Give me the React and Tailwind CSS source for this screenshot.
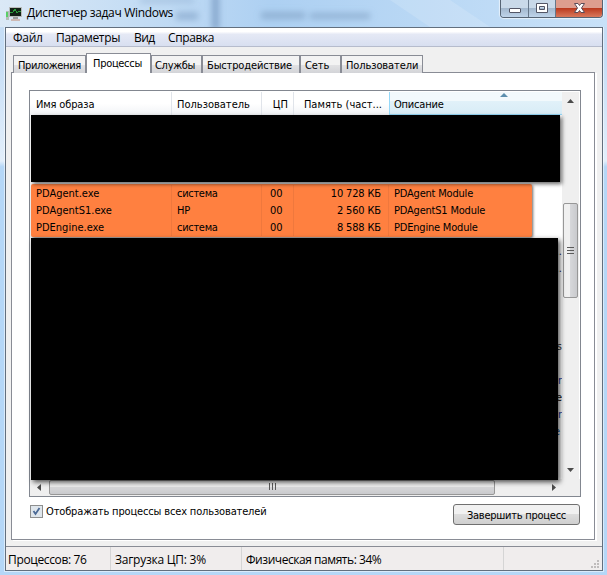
import { clsx } from 'clsx'

const MENU = [
  { label: 'Файл', style: 'w-[43px] tracking-[-0.3px]' },
  { label: 'Параметры', style: 'w-[78px] tracking-[-0.35px]' },
  { label: 'Вид', style: 'w-[34px] tracking-[-0.6px]' },
  { label: 'Справка', style: 'w-[60px] tracking-[-0.4px]' },
]

const TABS = [
  { label: 'Приложения', style: 'w-[73px] pl-[4px] tracking-[-0.35px]' },
  { label: 'Процессы', style: 'w-[65px] pl-[6px] tracking-[-0.3px]', active: true },
  { label: 'Службы', style: 'w-[51px] pl-[3px] tracking-[-0.3px]' },
  { label: 'Быстродействие', style: 'w-[98px] pl-[4px] tracking-[-0.15px]' },
  { label: 'Сеть', style: 'w-[41px] pl-[4px] tracking-[-0.1px]' },
  { label: 'Пользователи', style: 'w-[82px] pl-[4px] tracking-[-0.1px]' },
]

const PROCESSES = [
  { name: 'PDAgent.exe', user: 'система', cpu: '00', memory: '10 728 КБ', description: 'PDAgent Module' },
  { name: 'PDAgentS1.exe', user: 'HP', cpu: '00', memory: '2 560 КБ', description: 'PDAgentS1 Module' },
  { name: 'PDEngine.exe', user: 'система', cpu: '00', memory: '8 588 КБ', description: 'PDEngine Module' },
]

// last letters of the descriptions that stick out from under the cover
const CLIPPED = [
  { text: '..', style: 'mt-[0px] text-[#1c2d55]' },
  { text: '..', style: 'mt-[0px] text-[#1c2d55]' },
  { text: 's', style: 'mt-[61px] text-[#333333]' },
  { text: 'or', style: 'mt-[17px] text-[#233a9c]' },
  { text: 'e', style: 'mt-[0px] text-[#111111]' },
  { text: 'ur', style: 'mt-[0px] text-[#233a9c]' },
  { text: 'e', style: 'mt-[0px] mr-[2px] text-[#1d5a9c]' },
]

const COLUMNS = 'grid grid-cols-[141px_90px_32px_95px_1fr]'
const TAHOMA = "font-['DejaVu_Sans_Condensed','DejaVu_Sans',sans-serif] font-stretch-condensed"
const SEGOE = "font-['Open_Sans','Noto_Sans',sans-serif] font-stretch-normal"

const AppIcon = () => (
  <svg className="h-[16px] w-[17px]" viewBox="0 0 17 16" shapeRendering="crispEdges">
    <rect x="0" y="5" width="3" height="9" fill="#b4bdb6" />
    <rect x="0" y="6" width="2" height="5" fill="#59cf66" />
    <rect x="3" y="1" width="13" height="10" fill="#b9bcbb" />
    <rect x="4" y="2" width="11" height="8" fill="#122117" />
    <path d="M4 6h3l2-3 2 4 2-2h2" fill="none" stroke="#2b9c3c" />
    <rect x="7" y="11" width="5" height="2" fill="#9a9e9d" />
    <rect x="5" y="13" width="9" height="2" fill="#cdb9b4" />
  </svg>
)

const WindowButtons = () => (
  <div className="flex h-[18px] w-[103px] overflow-hidden rounded-b-[4px] border border-t-0 border-[#566474] shadow-[0_0_1px_1px_rgba(255,255,255,0.6)]">
    <button className="flex w-[28px] items-center justify-center border-r border-[#66778a] bg-linear-to-b from-[#c9d9e9] from-45% via-[#a3b8ce] via-50% to-[#bfd4ea]">
      <svg className="h-[17px] w-[27px]" viewBox="0 0 27 17">
        <rect x="8.5" y="8.5" width="11" height="4" rx="0.5" fill="#fff" stroke="#535666" />
      </svg>
    </button>
    <button className="flex w-[27px] items-center justify-center border-r border-[#66778a] bg-linear-to-b from-[#c9d9e9] from-45% via-[#a3b8ce] via-50% to-[#bfd4ea]">
      <svg className="h-[17px] w-[26px]" viewBox="0 0 26 17">
        <path d="M7.5 3.5h11v9h-11zM10.5 6.5v3h5v-3z" fill="#fff" fillRule="evenodd" stroke="#535666" />
      </svg>
    </button>
    <button className="flex flex-1 items-center justify-center bg-linear-to-b from-[#dd9d8e] from-45% via-[#bb3a1f] via-50% to-[#d9785c]">
      <svg className="h-[17px] w-[46px]" viewBox="0 0 46 17">
        <path d="M18.500 3.500h3.500l1.500 2 1.500-2h3.500l-3 4.500 3 4.500h-3.500l-1.500-2-1.500 2h-3.500l3-4.500z" fill="#fff" stroke="#5b4c58" />
      </svg>
    </button>
  </div>
)

// smudges of whatever lies behind the glass title bar
const GlassBackdrop = () => (
  <svg className="absolute inset-0 h-[27px] w-[607px]" viewBox="0 0 607 27">
    <defs>
      <filter id="smudge" x="-20%" y="-100%" width="140%" height="300%">
        <feGaussianBlur stdDeviation="3" />
      </filter>
    </defs>
    <g filter="url(#smudge)">
      <rect x="176" y="12" width="22" height="8" fill="#7f9fc4" opacity="0.6" />
      <rect x="140" y="-2" width="54" height="5" fill="#7f9fc4" opacity="0.4" />
      <rect x="212" y="-6" width="7" height="36" fill="#6f92ba" opacity="0.7" />
      <rect x="261" y="12" width="44" height="7" fill="#7d9cc0" opacity="0.6" />
      <rect x="310" y="13" width="60" height="6" fill="#7d9cc0" opacity="0.6" />
    </g>
    <path d="M390 0h60l40 27h-60z" fill="#fff" opacity="0.15" />
  </svg>
)

const Tab = ({ label, style, active }) => (
  <div
    className={clsx(
      'shrink-0 border border-b-0 border-[#898c95] whitespace-nowrap',
      style,
      active
        ? 'h-[20px] bg-white pt-[3px]'
        : 'h-[18px] bg-linear-to-b from-[#f3f3f3] from-50% via-[#e3e3e5] via-50% to-[#d3d4d8] pt-[3px]',
    )}
  >
    {label}
  </div>
)

const TableHeader = () => (
  <div className="flex h-[23px] w-[532px] bg-linear-to-b from-white from-50% to-[#f1f3f6] leading-[25px] whitespace-nowrap">
    <div className="w-[142px] border-r border-[#e0e4ea] pl-[6px] tracking-[-0.15px]">Имя образа</div>
    <div className="w-[90px] border-r border-[#e0e4ea] pl-[5px]">Пользователь</div>
    <div className="w-[32px] border-r border-[#e0e4ea] pr-[5px] text-right">ЦП</div>
    <div className="w-[95px] pr-[7px] text-right">Память (част...</div>
    <div className="relative flex-1 border-b border-l border-[#96d9f9] bg-linear-to-b from-[#f2f9fc] from-40% via-[#e1f1f9] via-42% to-[#d8ecf6] pl-[4px] tracking-[-0.2px]">
      Описание
      <svg className="absolute top-[1px] left-[110px] h-[4px] w-[8px]" viewBox="0 0 8 4">
        <path d="M0 4L4 0L8 4z" fill="#5d8fae" />
      </svg>
    </div>
  </div>
)

const ProcessRow = ({ process }) => (
  <div className={clsx(COLUMNS, 'h-[17px] leading-[17px] whitespace-nowrap')}>
    <div className="border-r border-[#ef783d] pl-[5px]">{process.name}</div>
    <div className="border-r border-[#ef783d] pl-[5px] tracking-[-0.3px]">{process.user}</div>
    <div className="border-r border-[#ef783d] pl-[8px]">{process.cpu}</div>
    <div className="border-r border-[#ef783d] pr-[7px] text-right tracking-[-0.15px]">{process.memory}</div>
    <div className="pl-[5px] tracking-[-0.2px]">{process.description}</div>
  </div>
)

const VerticalScrollbar = () => (
  <div className="flex h-[387px] w-[17px] flex-col items-center bg-[#efefef]">
    <svg className="mt-[7px] h-[4px] w-[7px]" viewBox="0 0 7 4">
      <path d="M0 4L3.500 0L7 4z" fill="#4b4b4b" />
    </svg>
    <div className="mt-[100px] flex h-[95px] w-[15px] flex-col items-center justify-center gap-[2px] rounded-[2px] border border-[#979797] bg-linear-to-r from-[#f0f0f0] from-45% via-[#d6d7da] via-50% to-[#c9cacd]">
      <div className="h-[1px] w-[7px] bg-[#5a5a5a]" />
      <div className="h-[1px] w-[7px] bg-[#5a5a5a]" />
      <div className="h-[1px] w-[7px] bg-[#5a5a5a]" />
    </div>
    <svg className="mt-auto mb-[7px] h-[4px] w-[7px]" viewBox="0 0 7 4">
      <path d="M0 0H7L3.500 4z" fill="#4b4b4b" />
    </svg>
  </div>
)

const HorizontalScrollbar = () => (
  <div className="flex h-[17px] items-center bg-[#efefef]">
    <svg className="ml-[7px] h-[7px] w-[4px]" viewBox="0 0 4 7">
      <path d="M4 0V7L0 3.500z" fill="#4b4b4b" />
    </svg>
    <div className="ml-[8px] flex h-[15px] w-[446px] items-start justify-center gap-[2px] rounded-[2px] border border-[#979797] bg-linear-to-b from-[#ececec] from-45% via-[#d6d6d8] via-50% to-[#c9cacd] pt-[2px]">
      <div className="h-[7px] w-[1px] bg-[#5a5a5a]" />
      <div className="h-[7px] w-[1px] bg-[#5a5a5a]" />
      <div className="h-[7px] w-[1px] bg-[#5a5a5a]" />
    </div>
    <svg className="ml-[57px] h-[7px] w-[4px]" viewBox="0 0 4 7">
      <path d="M0 0V7L4 3.500z" fill="#4b4b4b" />
    </svg>
  </div>
)

const ProcessTable = () => (
  <div className="relative h-[407px] w-[552px] border border-[#828790] bg-white">
    <div className="flex pt-[1px]">
      <div className="w-[532px]">
        <TableHeader />
        <div className="relative z-10 ml-[1px] h-[67px] w-[529px] bg-black shadow-[2px_2px_4px_rgba(0,0,0,0.6)]" />
        <div className="mt-[2px] ml-[1px] h-[53px] w-[501px] rounded-[2px] bg-[#ff8040] pt-[1px] shadow-[1px_1px_3px_rgba(0,0,0,0.6)]">
          {PROCESSES.map(process => <ProcessRow key={process.name} process={process} />)}
        </div>
        <div className="flex flex-col items-end pt-[6px]">
          {CLIPPED.map(({ text, style }, i) => (
            <span key={i} className={clsx('h-[17px] leading-[17px]', style)}>{text}</span>
          ))}
        </div>
      </div>
      <VerticalScrollbar />
    </div>
    <HorizontalScrollbar />
    <div className="absolute top-[147px] left-[1px] h-[242px] w-[527px] bg-black shadow-[2px_2px_5px_rgba(0,0,0,0.7)]" />
  </div>
)

const ResizeGrip = () => (
  <svg className="mt-auto mr-[2px] mb-[1px] ml-auto size-[9px]" viewBox="0 0 9 9" shapeRendering="crispEdges">
    <path d="M6 0h2v2h-2zM3 3h2v2h-2zM6 3h2v2h-2zM0 6h2v2h-2zM3 6h2v2h-2zM6 6h2v2h-2z" fill="#bfbcbc" />
  </svg>
)

const App = () => {
  return (
    <main className={clsx(TAHOMA, 'h-[575px] w-[607px] overflow-hidden bg-linear-to-b from-[#c6def6] from-10% via-[#e3effb] via-28% to-[#b5d7f7] to-29% text-[11px] leading-[14px] text-black')}>
      <header className="relative flex h-[27px] bg-linear-to-r from-[#dbe9f6] via-[#add0f2] via-45% to-[#c8e1f8]">
        <GlassBackdrop />
        <div className="relative mt-[6px] ml-[6px]"><AppIcon /></div>
        <h1 className={clsx(SEGOE, 'relative mt-[5px] ml-[4px] text-[12px] leading-[16px] tracking-[-0.32px]')}>Диспетчер задач Windows</h1>
        <div className="relative ml-auto pr-[4px]"><WindowButtons /></div>
      </header>
      <section className="ml-[5px] h-[544px] w-[598px] border border-[#626f7e] bg-[#f0f0f0] shadow-[0_0_0_1px_rgba(255,255,255,0.5)]">
        <nav className={clsx(SEGOE, 'flex h-[19px] border-b border-[#b6bccc] bg-linear-to-b from-white from-20% via-[#e5e9f5] via-35% to-[#d8dff0] pl-[7px] text-[12px] leading-[19px]')}>
          {MENU.map(({ label, style }) => <button key={label} className={clsx('text-left', style)}>{label}</button>)}
        </nav>
        <div className="pt-[6px] pl-[5px]">
          <div className="relative z-10 -mb-px flex items-end pl-[2px]">
            {TABS.map(tab => <Tab key={tab.label} {...tab} />)}
          </div>
          <div className="h-[468px] w-[584px] border border-[#898c95] bg-white pt-[17px] pl-[17px] shadow-[2px_1px_0_#fff]">
            <ProcessTable />
            <div className="flex w-[551px] items-start justify-between pt-[7px]">
              <label className="flex items-center gap-[3px] pl-[1px] tracking-[-0.15px]">
                <span className="flex size-[13px] items-center justify-center border border-[#8e8f8f] bg-[#dfe6ec]">
                  <svg className="size-[9px]" viewBox="0 0 9 9">
                    <path d="M1.500 4L3.500 7L7.500 1" fill="none" stroke="#4b6a96" strokeWidth="1.800" />
                  </svg>
                </span>
                <span className="pt-[1px]">Отображать процессы всех пользователей</span>
              </label>
              <button className="h-[21px] w-[127px] rounded-[3px] border border-[#707070] bg-linear-to-b from-[#f1f1f1] from-50% via-[#dddddd] via-50% to-[#cfcfcf] pt-[2px] tracking-[-0.25px]">
                Завершить процесс
              </button>
            </div>
          </div>
        </div>
        <footer className={clsx(SEGOE, 'mt-[6px] flex h-[24px] border-t border-[#898c95] bg-[#f0eded] text-[12px] leading-[25px] whitespace-nowrap')}>
          <div className="w-[105px] border-r border-[#d5d5d5] pl-[2px] tracking-[-0.35px]">Процессов: 76</div>
          <div className="w-[131px] border-r border-[#d5d5d5] pl-[4px] tracking-[-0.25px]">Загрузка ЦП: 3%</div>
          <div className="w-[262px] border-r border-[#d5d5d5] pl-[4px] tracking-[-0.45px]">Физическая память: 34%</div>
          <ResizeGrip />
        </footer>
      </section>
    </main>
  )
}

export default App
